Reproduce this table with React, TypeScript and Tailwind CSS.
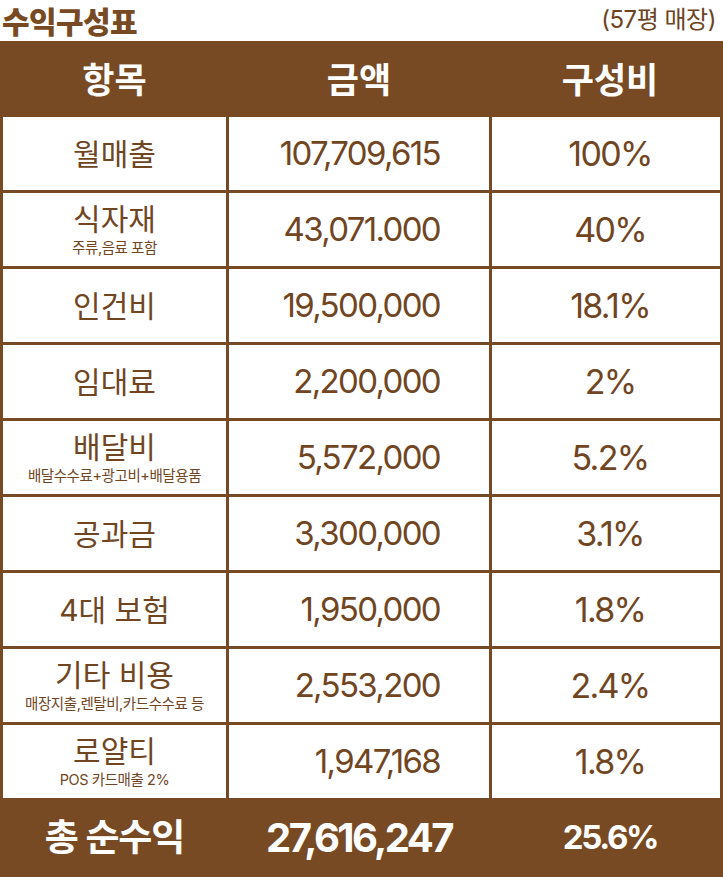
import React from 'react';

const rows: { label: string; sub?: string; amount: string; ratio: string }[] = [
  { label: '월매출', amount: '107,709,615', ratio: '100%' },
  { label: '식자재', sub: '주류,음료 포함', amount: '43,071.000', ratio: '40%' },
  { label: '인건비', amount: '19,500,000', ratio: '18.1%' },
  { label: '임대료', amount: '2,200,000', ratio: '2%' },
  { label: '배달비', sub: '배달수수료+광고비+배달용품', amount: '5,572,000', ratio: '5.2%' },
  { label: '공과금', amount: '3,300,000', ratio: '3.1%' },
  { label: '4대 보험', amount: '1,950,000', ratio: '1.8%' },
  { label: '기타 비용', sub: '매장지출,렌탈비,카드수수료 등', amount: '2,553,200', ratio: '2.4%' },
  { label: '로얄티', sub: 'POS 카드매출 2%', amount: '1,947,168', ratio: '1.8%' },
];

const font = { fontFamily: 'Inter, "Noto Sans CJK KR", sans-serif' };

const App: React.FC = () => {
  return (
    <div className="w-[723px] h-[877px] bg-white text-[#774a23]" style={font}>
      {/* 제목 */}
      <div className="flex h-[41px] items-start justify-between">
        <h1 className="pl-[2px] text-[30px] font-black leading-[44px] tracking-[-0.02em] text-[#774a23]">
          수익구성표
        </h1>
        <span className="pr-[7px] pt-[2px] text-[24px] leading-[36px] tracking-[-0.02em] text-[#6e431f]">
          (57평 매장)
        </span>
      </div>

      <div className="bg-[#774a23] px-[3px]">
        {/* 헤더 */}
        <div className="grid h-[76px] grid-cols-[223px_260px_228px] gap-x-[3px] text-[35px] font-bold text-white">
          <div className="flex items-center justify-center pt-[2px]">항목</div>
          <div className="flex items-center justify-center pt-[2px]">금액</div>
          <div className="flex items-center justify-center pl-[8px] pt-[2px]">구성비</div>
        </div>

        {/* 본문 */}
        <div className="grid grid-cols-[223px_260px_228px] gap-[3px] text-[#70451f]">
          {rows.map((r) => (
            <React.Fragment key={r.label}>
              <div className="flex h-[73px] flex-col items-center justify-center bg-white">
                <span className="text-[30px] leading-[32px]">{r.label}</span>
                {r.sub && (
                  <span className="mt-[5px] text-[14.5px] leading-[16px] tracking-[-0.03em]">{r.sub}</span>
                )}
              </div>
              <div className="flex h-[73px] items-center justify-end bg-white pr-[49px] text-[33px] tracking-[-0.05em]">
                {r.amount}
              </div>
              <div className="flex h-[73px] items-center justify-center bg-white pl-[8px] text-[34px] tracking-[-0.05em]">
                {r.ratio}
              </div>
            </React.Fragment>
          ))}
        </div>

        {/* 합계 */}
        <div className="grid h-[79px] grid-cols-[223px_260px_228px] gap-x-[3px] font-bold text-white">
          <div className="flex items-center justify-center text-[37px] tracking-[-0.03em]">총 순수익</div>
          <div className="flex items-center justify-center text-[40px] tracking-[-0.065em]">27,616,247</div>
          <div className="flex items-center justify-center pl-[8px] text-[33px] tracking-[-0.07em]">25.6%</div>
        </div>
      </div>
    </div>
  );
};

export default App;
